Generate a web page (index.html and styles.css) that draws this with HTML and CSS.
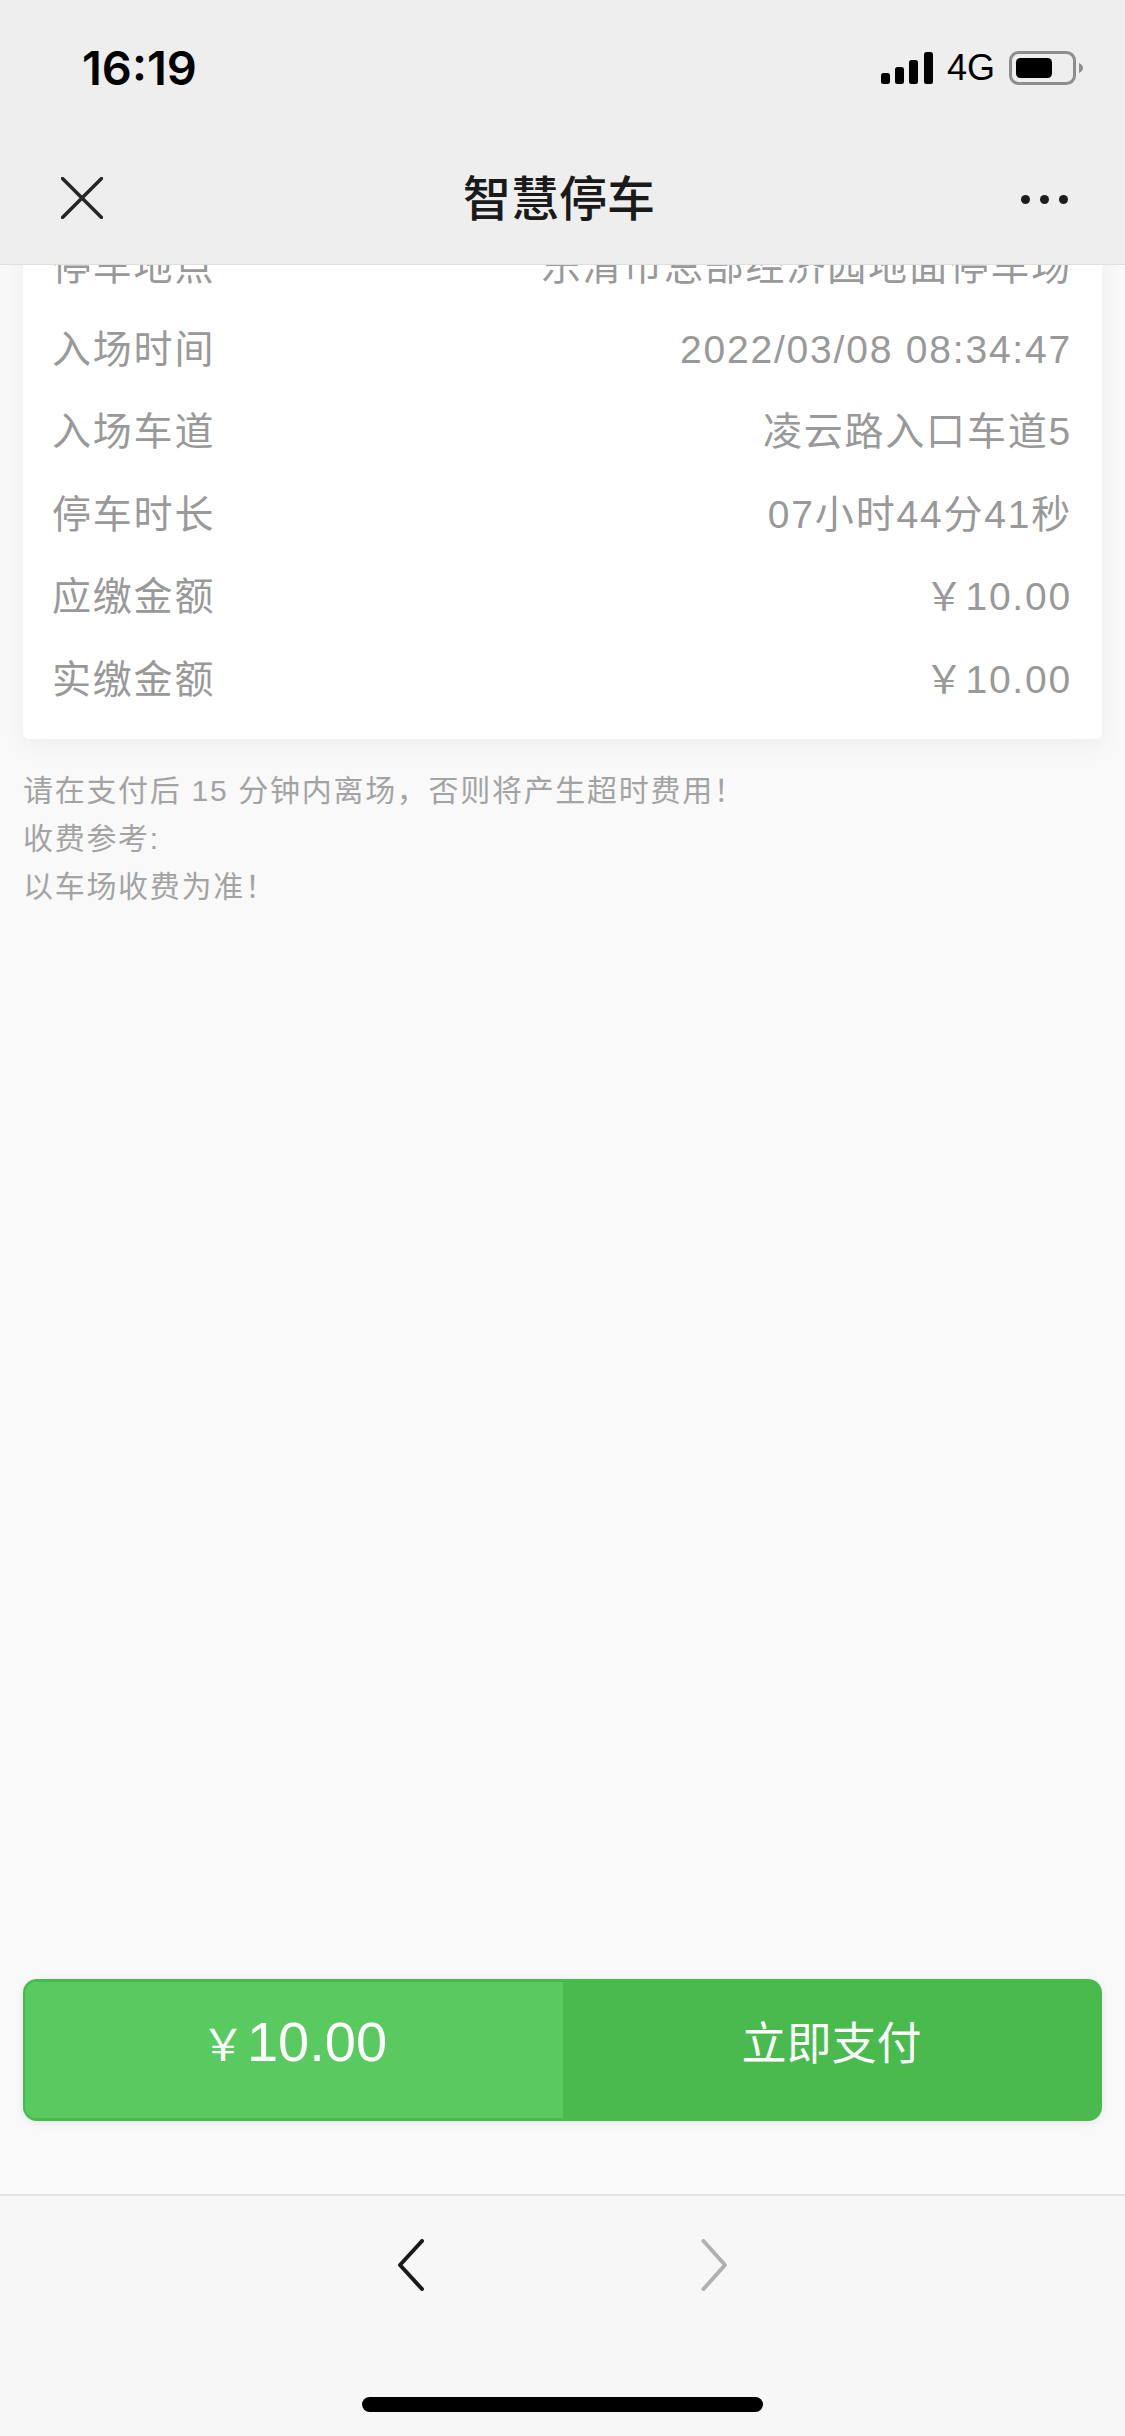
FILE: index.html
```html
<!DOCTYPE html>
<html lang="zh-CN">
<head>
<meta charset="utf-8">
<title>智慧停车</title>
<link rel="stylesheet" href="styles.css">
</head>
<body>
<div class="screen">
  <header class="top">
    <div class="status">
      <span class="time">16:19</span>
      <div class="status-right">
        <svg class="signal" width="52" height="32" viewBox="0 0 52 32"><rect x="0" y="21" width="9" height="11" rx="2.5"/><rect x="14" y="15" width="9" height="17" rx="2.5"/><rect x="28" y="8" width="9" height="24" rx="2.5"/><rect x="43" y="0" width="9" height="32" rx="2.5"/></svg>
        <span class="net">4G</span>
        <svg class="battery" width="74" height="34" viewBox="0 0 74 34"><rect x="1.5" y="1.5" width="64" height="31" rx="8" fill="none" stroke="#8e8e8e" stroke-width="3"/><rect x="7" y="7" width="36" height="20" rx="4.5" fill="#000"/><path d="M70 12v10c2.500-1 4-3 4-5s-1.500-4-4-5z" fill="#8e8e8e"/></svg>
      </div>
    </div>
    <nav class="nav">
      <svg class="close" width="42" height="42" viewBox="0 0 42 42"><path d="M1.500 1.500l39 39M40.500 1.500l-39 39" fill="none" stroke="#262626" stroke-width="3.500" stroke-linecap="square"/></svg>
      <h1 class="title">智慧停车</h1>
      <div class="more"><i></i><i></i><i></i></div>
    </nav>
  </header>
  <main class="content">
    <section class="card">
      <div class="row"><span>停车地点</span><span>乐清市总部经济园地面停车场</span></div>
      <div class="row"><span>入场时间</span><span>2022/03/08 08:34:47</span></div>
      <div class="row"><span>入场车道</span><span>凌云路入口车道5</span></div>
      <div class="row"><span>停车时长</span><span>07小时44分41秒</span></div>
      <div class="row"><span>应缴金额</span><span>￥10.00</span></div>
      <div class="row"><span>实缴金额</span><span>￥10.00</span></div>
    </section>
    <div class="notes">
      <p>请在支付后 15 分钟内离场，否则将产生超时费用！</p>
      <p>收费参考:</p>
      <p>以车场收费为准！</p>
    </div>
    <div class="pay">
      <div class="amount">￥<b>10.00</b></div>
      <div class="action">立即支付</div>
    </div>
  </main>
  <footer class="bottom">
    <div class="arrows">
      <svg width="26" height="52" viewBox="0 0 26 52"><path d="M24 2L2 26l22 24" fill="none" stroke="#1a1a1a" stroke-width="4" stroke-linecap="round" stroke-linejoin="round"/></svg>
      <svg width="26" height="52" viewBox="0 0 26 52"><path d="M2.500 2L24 26 2.500 50" fill="none" stroke="#b0b0b0" stroke-width="4" stroke-linecap="round" stroke-linejoin="round"/></svg>
    </div>
    <div class="home"></div>
  </footer>
</div>
</body>
</html>
```

FILE: styles.css
```css
* { box-sizing: border-box; }
html, body { margin: 0; padding: 0; }
body {
  width: 1125px;
  height: 2436px;
  overflow: hidden;
  font-family: "Liberation Sans", "Noto Sans CJK SC", sans-serif;
  background: #f9f9f9;
}
.screen {
  width: 1125px;
  height: 2436px;
  display: flex;
  flex-direction: column;
}
.top {
  height: 265px;
  flex: none;
  background: #eeeeef;
  border-bottom: 1px solid #dfdfdf;
  position: relative;
  z-index: 2;
}
.status {
  height: 137px;
  padding: 33px 42px 0 82px;
  display: flex;
  justify-content: space-between;
  align-items: flex-start;
}
.time {
  font-family: "Inter", "Liberation Sans", sans-serif;
  font-size: 47px;
  font-weight: 600;
  line-height: 70px;
  color: #000;
}
.status-right {
  display: flex;
  align-items: center;
  height: 70px;
  gap: 12px;
}
.signal { fill: #000; margin-right: 2px; }
.net {
  font-size: 36px;
  color: #000;
  line-height: 40px;
}
.battery { margin-left: 2px; }
.nav {
  height: 127px;
  padding: 0 57px 0 61px;
  display: flex;
  align-items: center;
  justify-content: space-between;
}
.nav .close { margin-top: -5px; }
.title {
  margin: -2px 0 0 -6px;
  font-size: 48px;
  font-weight: 500;
  line-height: 60px;
  color: #1a1a1a;
}
.more {
  display: flex;
  gap: 10px;
  margin-top: -2px;
}
.more i {
  width: 9px;
  height: 9px;
  border-radius: 50%;
  background: #1d1d1d;
}
.content {
  flex: 1;
  min-height: 0;
  overflow: hidden;
  padding: 0 23px;
  display: flex;
  flex-direction: column;
}
.card {
  flex: none;
  margin-top: -39px;
  padding: 0 32px 18px 29px;
  background: #fff;
  border-radius: 6px;
  box-shadow: 0 6px 24px rgba(0, 0, 0, 0.05);
}
.row {
  height: 82.500px;
  display: flex;
  justify-content: space-between;
  align-items: baseline;
  font-size: 39px;
  line-height: 82.500px;
  letter-spacing: 1.800px;
  color: #999;
  white-space: nowrap;
}
.row span:last-child { margin-right: -2px; }
.notes {
  margin-top: 28px;
  font-size: 30px;
  letter-spacing: 1.700px;
  line-height: 48px;
  color: #a3a3a3;
}
.notes p { margin: 0; }
.pay {
  margin-top: auto;
  margin-bottom: 73px;
  height: 142px;
  flex: none;
  display: flex;
  background: #48ba4e;
  border-radius: 14px;
  padding: 3px 0 3px 2px;
  box-shadow: 0 2px 8px rgba(0, 0, 0, 0.08);
  overflow: hidden;
}
.amount, .action {
  display: flex;
  align-items: center;
  justify-content: center;
  color: #fff;
}
.amount {
  flex: none;
  width: 538px;
  padding-bottom: 17px;
  background: #59ca60;
  border-radius: 11px 0 0 11px;
  font-size: 44px;
}
.amount b {
  font-weight: 400;
  font-size: 56px;
  margin-left: 2px;
}
.action {
  flex: 1;
  padding: 0 2px 19px 0;
  font-size: 45px;
}
.bottom {
  height: 242px;
  flex: none;
  background: #f7f7f7;
  border-top: 2px solid #e2e2e2;
  display: flex;
  flex-direction: column;
  align-items: center;
}
.arrows {
  margin-top: 43px;
  display: flex;
  gap: 277px;
}
.home {
  margin-top: 106px;
  width: 401px;
  height: 15px;
  border-radius: 8px;
  background: #000;
}
```
